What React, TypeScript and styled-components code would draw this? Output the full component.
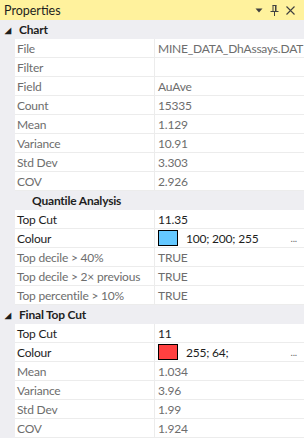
import React from 'react';
import styled, { createGlobalStyle } from 'styled-components';

type Prop = {
  label: string;
  value: string;
  editable?: boolean;
  swatch?: string;
};

type Category = {
  title: string;
  nested?: boolean;
  props: Prop[];
};

const categories: Category[] = [
  {
    title: 'Chart',
    props: [
      { label: 'File', value: 'MINE_DATA_DhAssays.DAT' },
      { label: 'Filter', value: '' },
      { label: 'Field', value: 'AuAve' },
      { label: 'Count', value: '15335' },
      { label: 'Mean', value: '1.129' },
      { label: 'Variance', value: '10.91' },
      { label: 'Std Dev', value: '3.303' },
      { label: 'COV', value: '2.926' },
    ],
  },
  {
    title: 'Quantile Analysis',
    nested: true,
    props: [
      { label: 'Top Cut', value: '11.35', editable: true },
      { label: 'Colour', value: '100; 200; 255', editable: true, swatch: '#64c8ff' },
      { label: 'Top decile > 40%', value: 'TRUE' },
      { label: 'Top decile > 2\u00d7 previous', value: 'TRUE' },
      { label: 'Top percentile > 10%', value: 'TRUE' },
    ],
  },
  {
    title: 'Final Top Cut',
    props: [
      { label: 'Top Cut', value: '11', editable: true },
      { label: 'Colour', value: '255; 64;', editable: true, swatch: '#ff4040' },
      { label: 'Mean', value: '1.034' },
      { label: 'Variance', value: '3.96' },
      { label: 'Std Dev', value: '1.99' },
      { label: 'COV', value: '1.924' },
    ],
  },
];

export default function App() {
  return (
    <>
      <GlobalStyle />
      <Panel>
        <TitleBar>
          <span>Properties</span>
          <TitleIcons>
            <svg width="8" height="5" viewBox="0 0 8 5">
              <path d="M0.5 0.5 L7.5 0.5 L4 4.5 Z" fill="#404040" />
            </svg>
            <svg width="9" height="11" viewBox="0 0 9 11">
              <path
                d="M2.5 0.5 H6.5 M3 0.5 V6 M6 0.5 V6 M0.5 6.5 H8.5 M4.5 6.5 V11"
                stroke="#404040"
                strokeWidth="1"
                fill="none"
              />
              <rect x="5" y="1" width="1" height="5" fill="#404040" />
            </svg>
            <svg width="9" height="9" viewBox="0 0 9 9">
              <path d="M0.5 0.5 L8.5 8.5 M8.5 0.5 L0.5 8.5" stroke="#404040" strokeWidth="1.1" />
            </svg>
          </TitleIcons>
        </TitleBar>
        {categories.map((cat) => (
          <section key={cat.title}>
            <CategoryRow $nested={cat.nested}>
              {!cat.nested && <Expander>◢</Expander>}
              {cat.title}
            </CategoryRow>
            {cat.props.map((p) => (
              <Row key={cat.title + p.label}>
                <Gutter />
                <LabelCell $editable={p.editable}>{p.label}</LabelCell>
                <ValueCell $editable={p.editable}>
                  {p.swatch && <Swatch style={{ background: p.swatch }} />}
                  <ValueText $indent={!!p.swatch}>{p.value}</ValueText>
                  {p.swatch && <Ellipsis>...</Ellipsis>}
                </ValueCell>
              </Row>
            ))}
          </section>
        ))}
      </Panel>
    </>
  );
}

const GlobalStyle = createGlobalStyle`
  body {
    margin: 0;
    background: #ffffff;
    font-family: Lato, 'Liberation Sans', sans-serif;
    font-size: 12px;
    letter-spacing: -0.2px;
  }
`;

const Panel = styled.div`
  width: 304px;
  height: 446px;
  background: #ffffff;
  overflow: hidden;
`;

const TitleBar = styled.div`
  height: 20px;
  background: #fff29d;
  color: #1e1e1e;
  display: flex;
  align-items: center;
  justify-content: space-between;
  padding: 0 9px 0 4px;
  font-size: 12.5px;
  letter-spacing: 0;
`;

const TitleIcons = styled.div`
  display: flex;
  align-items: center;
  gap: 7px;
`;

const CategoryRow = styled.div<{ $nested?: boolean }>`
  height: 19px;
  background: #eeeef2;
  display: flex;
  align-items: center;
  padding-left: ${(props) => (props.$nested ? '32px' : '5px')};
  font-weight: bold;
  color: #1e1e1e;
`;

const Expander = styled.span`
  width: 14px;
  font-size: 8px;
  color: #1e1e1e;
`;

const Row = styled.div`
  display: flex;
  height: 19px;
`;

const Gutter = styled.div`
  width: 15px;
  flex: none;
  background: #eeeef2;
`;

const LabelCell = styled.div<{ $editable?: boolean }>`
  width: 137px;
  flex: none;
  padding-left: 2px;
  border-right: 1px solid #ececec;
  border-bottom: 1px solid #ececec;
  display: flex;
  align-items: center;
  white-space: nowrap;
  color: ${(props) => (props.$editable ? '#1e1e1e' : '#6d6d6d')};
`;

const ValueCell = styled.div<{ $editable?: boolean }>`
  flex: 1;
  padding-left: 3px;
  padding-right: 7px;
  border-bottom: 1px solid #ececec;
  display: flex;
  align-items: center;
  white-space: nowrap;
  color: ${(props) => (props.$editable ? '#1e1e1e' : '#6d6d6d')};
`;

const Swatch = styled.span`
  width: 18px;
  height: 14px;
  border: 1px solid #000000;
  flex: none;
`;

const ValueText = styled.span<{ $indent: boolean }>`
  flex: 1;
  margin-left: ${(props) => (props.$indent ? '8px' : '0')};
`;

const Ellipsis = styled.span`
  color: #6d6d6d;
  font-size: 10px;
`;
